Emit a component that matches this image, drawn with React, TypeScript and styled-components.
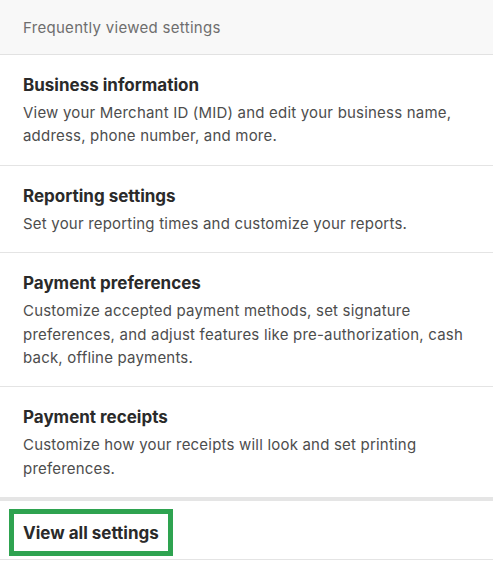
import styled, { createGlobalStyle } from 'styled-components';

type SettingItem = {
  title: string;
  description: string;
};

const settings: SettingItem[] = [
  {
    title: 'Business information',
    description: 'View your Merchant ID (MID) and edit your business name, address, phone number, and more.',
  },
  {
    title: 'Reporting settings',
    description: 'Set your reporting times and customize your reports.',
  },
  {
    title: 'Payment preferences',
    description:
      'Customize accepted payment methods, set signature preferences, and adjust features like pre-authorization, cash back, offline payments.',
  },
  {
    title: 'Payment receipts',
    description: 'Customize how your receipts will look and set printing preferences.',
  },
];

const App = () => {
  return (
    <>
      <GlobalStyle />
      <Panel>
        <Header>Frequently viewed settings</Header>
        <List>
          {settings.map((item) => (
            <Row key={item.title}>
              <Title>{item.title}</Title>
              <Description>{item.description}</Description>
            </Row>
          ))}
        </List>
        <Footer>
          <Highlight>
            <FooterLink>View all settings</FooterLink>
          </Highlight>
        </Footer>
      </Panel>
    </>
  );
};

export default App;

const GlobalStyle = createGlobalStyle`
  * {
    box-sizing: border-box;
  }

  body {
    margin: 0;
    background: #fff;
    font-family: Inter, "Liberation Sans", sans-serif;
  }
`;

const Panel = styled.div`
  width: 493px;
  display: flex;
  flex-direction: column;
  background: #fff;
`;

const Header = styled.div`
  height: 55px;
  padding: 0 23px;
  display: flex;
  align-items: center;
  background: #f8f8f8;
  border-bottom: 1px solid #e2e2e2;
  color: #6e6e6e;
  font-size: 15px;
  letter-spacing: 0.3px;
`;

const List = styled.div`
  display: flex;
  flex-direction: column;
  border-bottom: 4px solid #e5e5e5;
`;

const Row = styled.div`
  padding: 18px 23px 17px;
  border-bottom: 1px solid #e4e4e4;

  &:last-child {
    border-bottom: none;
  }
`;

const Title = styled.div`
  font-size: 17px;
  line-height: 24px;
  font-weight: 700;
  color: #2a2a2a;
  margin-bottom: 4px;
`;

const Description = styled.div`
  font-size: 15px;
  line-height: 23.4px;
  color: #4d4d4d;
  letter-spacing: 0.2px;
`;

const Footer = styled.div`
  height: 59px;
  padding: 8px 0 0 9px;
  border-bottom: 1px solid #e4e4e4;
`;

const Highlight = styled.div`
  display: inline-flex;
  align-items: center;
  height: 47px;
  padding: 0 9px;
  border: 5px solid #2ea350;
`;

const FooterLink = styled.span`
  font-size: 17px;
  font-weight: 700;
  color: #2a2a2a;
`;
